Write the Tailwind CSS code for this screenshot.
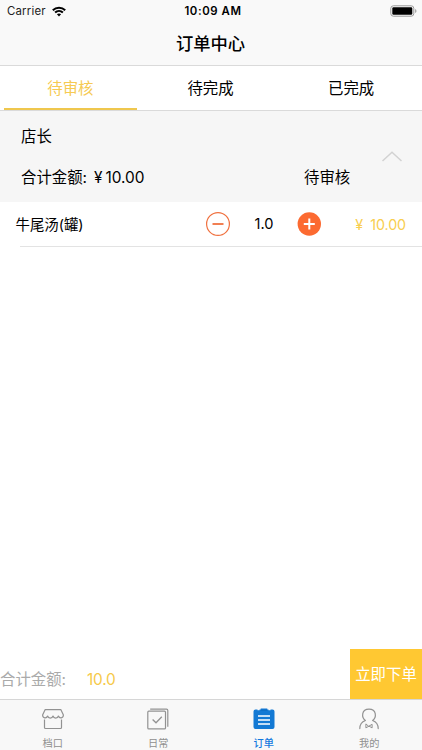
<!DOCTYPE html>
<html lang="zh-CN">
<head>
<meta charset="UTF-8">
<meta name="viewport" content="width=device-width, initial-scale=1">
<title>订单中心</title>
<script src="https://cdn.jsdelivr.net/npm/@tailwindcss/browser@4"></script>
</head>
<body class="h-[750px] w-[422px] overflow-hidden bg-white font-['Inter','Noto_Sans_CJK_SC',sans-serif] text-[15.4px] text-black">
<div class="flex h-full flex-col">
  <header class="flex h-[66px] shrink-0 flex-col border-b border-[#dadada] bg-[#f9f9f9]">
    <div class="grid h-[22px] grid-cols-3 items-center pr-[5px] pl-[7px] text-[11.4px] leading-[22px]">
      <div class="flex items-center gap-[6px] text-[#222]">
        <span class="tracking-[0.2px]">Carrier</span>
        <svg class="h-[11px] w-[14px]" viewBox="0 0 14 11" fill="none" stroke="#000" stroke-width="2"><path d="M.8 4.200C4.300.8 9.700.8 13.200 4.200M3.100 6.500c2.200-2.100 5.600-2.100 7.800 0"/><path d="M4.900 8.300c1.200-1 3-1 4.200 0L7 10.500z" fill="#000" stroke="none"/></svg>
      </div>
      <span class="ml-[2px] text-center text-[11.4px] font-semibold whitespace-nowrap tracking-[0.6px]">10:09 AM</span>
      <svg class="mb-[1px] h-[12px] w-[27px] justify-self-end" viewBox="0 0 27 12"><rect x=".8" y=".8" width="23" height="10.400" rx="2.600" fill="none" stroke="#999"/><rect x="2.300" y="2.300" width="20" height="7.400" rx="1.200"/><path d="M25.200 4v4c1.700-.6 1.700-3.400 0-4" fill="#999"/></svg>
    </div>
    <h1 class="flex flex-1 items-center justify-center pt-px pr-px text-[17.3px] font-medium">订单中心</h1>
  </header>

  <nav class="grid h-[45px] shrink-0 grid-cols-3 border-b border-[#dadada] leading-[45px]">
    <div class="flex justify-center px-[4px] text-[#f6ca52]"><span class="h-[44px] w-full border-b-2 border-[#efc74e] text-center">待审核</span></div>
    <div class="pr-px text-center">待完成</div>
    <div class="pr-px text-center">已完成</div>
  </nav>

  <section class="flex h-[91px] shrink-0 bg-[#f6f6f6] pl-[21px]">
    <div class="flex w-[283px] flex-col pt-[14px] leading-[23px]">
      <span>店长</span>
      <span class="mt-[18px] flex"><span>合计金额:</span><span class="ml-[7px]">¥</span><span class="ml-[3px]">10.00</span></span>
    </div>
    <span class="mt-[55px] w-[78px] leading-[23px]">待审核</span>
    <svg class="mt-[40px] h-[11px] w-[20px]" viewBox="0 0 20 11" fill="none" stroke="#d2d2d2" stroke-width="1.500"><path d="M.5 10 10 1.200 19.500 10"/></svg>
  </section>

  <section class="flex h-[44px] shrink-0 items-center pl-[15px]">
    <span class="w-[190px] pt-[2px] pl-[0.500px] text-[14.400px]">牛尾汤(罐)</span>
    <svg class="h-[26px] w-[26px]" viewBox="0 0 26 26" fill="none" stroke="#f0713f"><circle cx="13" cy="13" r="11.400" stroke-width="1.200"/><path d="M7.500 13h11" stroke-width="1.800"/></svg>
    <span class="w-[66px] pt-px text-center text-[14.600px]">1.0</span>
    <svg class="h-[24px] w-[24px]" viewBox="0 0 24 24"><circle cx="12.300" cy="12" r="11.700" fill="#fc6a31"/><path d="M6.800 12h11M12.300 6.500v11" stroke="#fff" stroke-width="2"/></svg>
    <span class="flex flex-1 justify-end gap-[7px] pt-px pr-[16px] text-[14.300px] text-[#f8ce4f]"><span>¥</span><span class="tracking-[-0.1px]">10.00</span></span>
  </section>
  <div class="ml-[20px] h-px shrink-0 bg-[#e3e3e3]"></div>
  <main class="flex-1"></main>

  <section class="flex h-[50px] shrink-0">
    <span class="mt-[19px] w-[87px] leading-[23px] text-[#aaa]">合计金额:</span>
    <span class="mt-[19px] flex-1 leading-[23px] tracking-[-0.2px] text-[#f6c949]">10.0</span>
    <button class="w-[72px] bg-[#ffc832] pt-[2px] text-[15.4px] whitespace-nowrap text-white">立即下单</button>
  </section>

  <footer class="grid h-[51px] shrink-0 grid-cols-4 border-t border-[#d6d6d6] bg-[#f8f8f8] text-[10.200px] leading-[14px] text-[#8f8f8f]">
    <div class="flex flex-col items-center pt-[8px]">
      <svg class="h-[22px] w-[22px]" viewBox="0 0 22 22" fill="none" stroke="#929292" stroke-width="1.200" stroke-linejoin="round"><path d="M3.200 1.600h15.600L21.400 7c0 3.400-4 3.700-5 1-.8 2.700-4.600 2.700-5.400 0-.8 2.700-4.600 2.700-5.400 0-1 2.700-5 2.400-5-1zM2.500 11.500v8q0 1 1 1h15q1 0 1-1v-8"/></svg>
      <span class="mt-[6px]">档口</span>
    </div>
    <div class="flex flex-col items-center pt-[8px]">
      <svg class="h-[22px] w-[22px]" viewBox="0 0 22 22" fill="none" stroke="#929292" stroke-width="1.200"><rect x=".8" y="3.200" width="17.700" height="17.700" rx="1"/><path d="M3.200 1.100h16.300q1.300 0 1.300 1.300v16.400"/><path d="m5.600 11.500 3.400 3.300 5.800-6" stroke-width="1.300"/></svg>
      <span class="mt-[6px]">日常</span>
    </div>
    <div class="flex flex-col items-center pt-[8px] font-medium text-[#1379df]">
      <svg class="h-[22px] w-[22px]" viewBox="0 0 22 22"><path d="M2.500 1.500h2v.8h2v-.8h1.200V.6h6.600v.9h1.200v.8h2v-.8h2q2 0 2 2v15.400q0 2-2 2h-17q-2 0-2-2V3.500q0-2 2-2z" fill="#1379d4"/><path d="M5 8h12M5 12h12M5 16h12" stroke="#fff" stroke-width="1.300"/><path d="M7.700 2.300h6.600" stroke="#0a68bd" stroke-width=".7"/></svg>
      <span class="mt-[6px]">订单</span>
    </div>
    <div class="flex flex-col items-center pt-[8px]">
      <svg class="h-[22px] w-[22px]" viewBox="0 0 22 22" fill="none" stroke="#929292" stroke-width="1.200" stroke-linecap="round" stroke-linejoin="round"><path d="M1.800 20.600c0-4.500 2-6.800 5.600-8.100C3.200 9.600 3.400 1.100 11 1.100s7.800 8.500 3.600 11.400c3.600 1.300 5.600 3.600 5.600 8.100"/><path d="M7.900 16.300v3.600L11 18.100l3.100 1.800v-3.600L11 18.100z" stroke-width="1"/></svg>
      <span class="mt-[6px]">我的</span>
    </div>
  </footer>
</div>
</body>
</html>
